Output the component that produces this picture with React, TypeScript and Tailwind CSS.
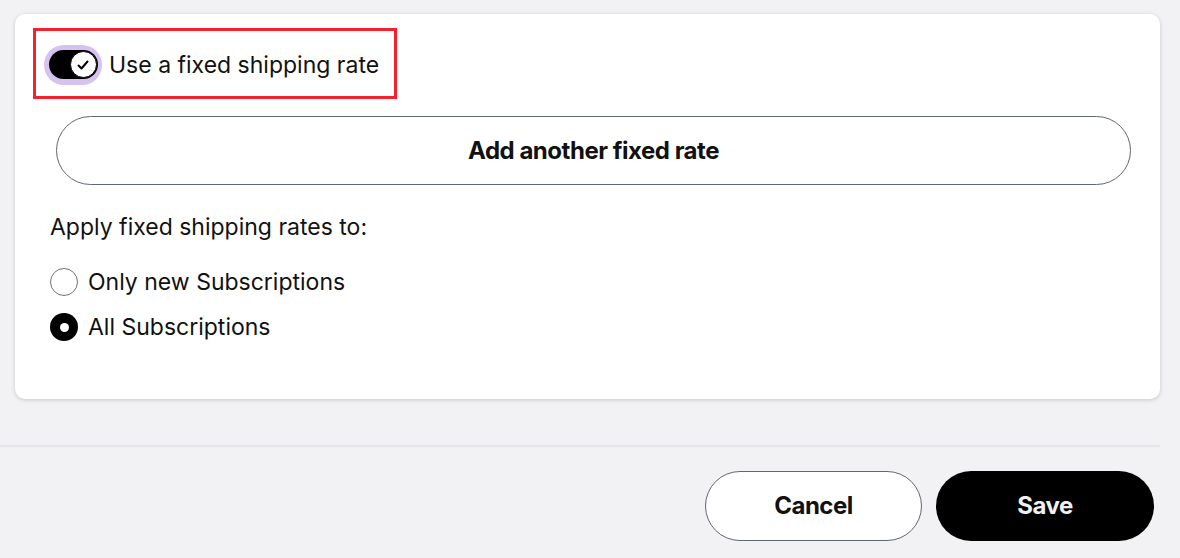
import React from "react";

export default function App() {
  return (
    <div className="w-[1180px] h-[558px] bg-[#f2f2f4] overflow-hidden" style={{ fontFamily: "Inter, 'Noto Sans', sans-serif" }}>
      <div className="pt-[14px] pl-[15px] pr-[20px]">
        <div className="w-[1145px] h-[385px] bg-white rounded-[10px] shadow-[0_1px_4px_rgba(0,0,0,0.18)] pt-[14px] pl-[18px] pr-[29px]">
          <div className="w-[364px] h-[71px] border-[3px] border-[#f5222d] flex items-center pl-[8px]">
            <div className="mt-[2px] w-[58px] h-[40px] rounded-full bg-[#d6c2ee] flex items-center justify-center">
              <div className="w-[49px] h-[29px] rounded-full bg-black flex items-center justify-end pr-[1px]">
                <div className="w-[27px] h-[27px] rounded-full bg-white border-[1.5px] border-black flex items-center justify-center">
                  <svg width="16" height="16" viewBox="0 0 16 16" fill="none" stroke="black" strokeWidth="2" strokeLinecap="round" strokeLinejoin="round">
                    <path d="M3.5 8.5l3 3 6-7" />
                  </svg>
                </div>
              </div>
            </div>
            <span className="ml-[7px] mt-[3px] text-[23px] text-[#111] leading-none">Use a fixed shipping rate</span>
          </div>
          <button className="mt-[17px] ml-[23px] w-[1075px] h-[69px] rounded-full border-[1.5px] border-[#5f6770] bg-white flex items-center justify-center text-[24px] font-bold tracking-[-0.02em] text-[#111]">
            Add another fixed rate
          </button>
          <div className="mt-[31px] ml-[17px] text-[23px] text-[#111] leading-none">Apply fixed shipping rates to:</div>
          <div className="mt-[29px] ml-[17px] flex flex-col gap-[17px]">
            <label className="flex items-center gap-[10px] h-[28px]">
              <span className="w-[28px] h-[28px] rounded-full border-[1.5px] border-[#6b7279] bg-white" />
              <span className="text-[23px] text-[#111] leading-none">Only new Subscriptions</span>
            </label>
            <label className="flex items-center gap-[10px] h-[28px]">
              <span className="w-[28px] h-[28px] rounded-full bg-black flex items-center justify-center">
                <span className="w-[9px] h-[9px] rounded-full bg-white" />
              </span>
              <span className="text-[23px] text-[#111] leading-none">All Subscriptions</span>
            </label>
          </div>
        </div>
      </div>
      <div className="mt-[46px] w-[1160px] h-[2px] bg-[#e6e6ea]" />
      <div className="mt-[24px] flex justify-end gap-[14px] pr-[26px]">
        <button className="w-[217px] h-[70px] rounded-full border-[1.5px] border-[#5f6770] bg-white text-[24px] font-bold tracking-[-0.02em] text-[#111]">Cancel</button>
        <button className="w-[218px] h-[70px] rounded-full bg-black text-[24px] font-bold tracking-[-0.02em] text-[#f0f0f0]">Save</button>
      </div>
    </div>
  );
}
